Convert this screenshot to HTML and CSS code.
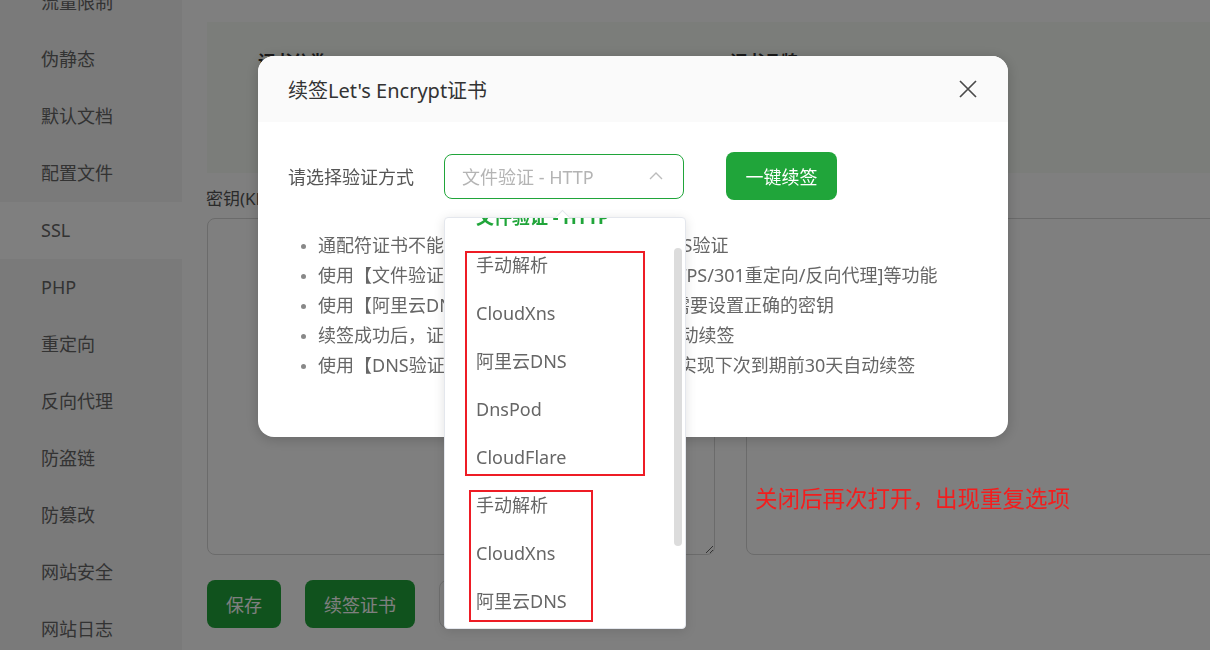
FILE: index.html
```html
<!DOCTYPE html>
<html lang="zh-CN">
<head>
    <meta charset="UTF-8">
    <meta name="viewport" content="width=device-width, initial-scale=1.0">
    <title>续签Let's Encrypt证书</title>
    <link rel="stylesheet" href="styles.css">
</head>
<body>
    <div class="page">
        <aside class="side">
            <ul class="side-menu">
                <li>流量限制</li>
                <li>伪静态</li>
                <li>默认文档</li>
                <li>配置文件</li>
                <li class="active">SSL</li>
                <li>PHP</li>
                <li>重定向</li>
                <li>反向代理</li>
                <li>防盗链</li>
                <li>防篡改</li>
                <li>网站安全</li>
                <li>网站日志</li>
            </ul>
        </aside>
        <main class="main">
            <section class="cert-info">
                <div class="info-row">
                    <span class="info-cell"><b>证书分类：</b><span class="green">Let's Encrypt</span></span>
                    <span class="info-cell"><b>证书品牌：</b>R10</span>
                </div>
                <div class="info-row">
                    <span class="info-cell"><b>认证域名：</b>www.example.com</span>
                    <span class="info-cell"><b>到期时间：</b>剩余89天</span>
                </div>
                <div class="info-row">
                    <span class="info-cell"><b>强制HTTPS：</b>未开启</span>
                </div>
            </section>
            <div class="cert-edit">
                <div class="edit-col">
                    <label class="edit-label">密钥(KEY)</label>
                    <textarea class="edit-box"></textarea>
                </div>
                <div class="edit-col">
                    <label class="edit-label">证书(PEM格式)</label>
                    <textarea class="edit-box"></textarea>
                </div>
            </div>
            <div class="actions">
                <button class="btn">保存</button>
                <button class="btn">续签证书</button>
                <button class="btn btn-plain">关闭SSL</button>
            </div>
        </main>
    </div>

    <div class="mask"></div>

    <div class="dialog">
        <div class="dialog-head">
            <span class="dialog-title">续签Let's Encrypt证书</span>
            <svg class="dialog-close" width="20" height="20" viewBox="0 0 20 20">
                <path d="M2 2 L18 18 M18 2 L2 18" stroke="#4a4a4a" stroke-width="1.7" fill="none"/>
            </svg>
        </div>
        <div class="dialog-body">
            <div class="form-row">
                <span class="form-label">请选择验证方式</span>
                <div class="select">
                    <span class="select-text">文件验证 - HTTP</span>
                    <svg class="select-arrow" width="14" height="8" viewBox="0 0 14 8">
                        <path d="M1 7 L7 1 L13 7" stroke="#bcbcbc" stroke-width="1.4" fill="none"/>
                    </svg>
                </div>
                <button class="btn btn-renew">一键续签</button>
            </div>
            <ul class="tips">
                <li>通配符证书不能使用【文件验证】，请选择 DNS验证</li>
                <li>使用【文件验证】时,请确保没有开启[强制HTTPS/301重定向/反向代理]等功能</li>
                <li>使用【阿里云DNS】【DNSPod】等验证方式 需要设置正确的密钥</li>
                <li>续签成功后，证书将会在到期前30天内尝试自动续签</li>
                <li>使用【DNS验证】时，请配置正确的接口才能实现下次到期前30天自动续签</li>
            </ul>
        </div>
    </div>

    <div class="dropdown">
        <span class="dropdown-arrow"></span>
        <div class="dropdown-view">
            <ul class="options">
                <li class="selected">文件验证 - HTTP</li>
                <li>手动解析</li>
                <li>CloudXns</li>
                <li>阿里云DNS</li>
                <li>DnsPod</li>
                <li>CloudFlare</li>
                <li>手动解析</li>
                <li>CloudXns</li>
                <li>阿里云DNS</li>
                <li>DnsPod</li>
            </ul>
            <span class="scroll-thumb"></span>
        </div>
    </div>

    <div class="mark mark-first"></div>
    <div class="mark mark-second"></div>
    <p class="note">关闭后再次打开，出现重复选项</p>
</body>
</html>
```

FILE: styles.css
```css
html, body {
    margin: 0;
    padding: 0;
}
body {
    width: 1210px;
    height: 650px;
    overflow: hidden;
    font-family: "Noto Sans", "Noto Sans CJK SC", sans-serif;
    color: #333;
    background: #fff;
}
ul {
    margin: 0;
    padding: 0;
    list-style: none;
}
.page {
    display: flex;
    height: 650px;
}

/* 左侧菜单 */
.side {
    width: 182px;
    flex-shrink: 0;
    background: #f4f4f4;
    overflow: hidden;
}
.side-menu {
    margin-top: -26px;
}
.side-menu li {
    height: 57px;
    line-height: 57px;
    padding-left: 41px;
    font-size: 18px;
    color: #666;
}
.side-menu li.active {
    background: #fff;
}

/* 主体 */
.main {
    flex: 1;
    padding: 22px 0 0 25px;
    min-width: 0;
}
.cert-info {
    height: 151px;
    box-sizing: border-box;
    padding: 22px 0 0 51px;
    background: #f6faf4;
    white-space: nowrap;
}
.info-row {
    display: flex;
    line-height: 36px;
    font-size: 17px;
}
.info-cell {
    width: 472px;
    flex-shrink: 0;
}
.info-cell b {
    color: #333;
}
.green {
    color: #20a53a;
}
.cert-edit {
    display: flex;
    gap: 31px;
}
.edit-col {
    width: 508px;
    flex-shrink: 0;
}
.edit-label {
    display: block;
    margin: 14px 0 7px -1px;
    line-height: 24px;
    font-size: 17px;
    color: #555;
}
.edit-box {
    display: block;
    width: 508px;
    height: 337px;
    box-sizing: border-box;
    border: 1px solid #d6d6d6;
    border-radius: 8px;
    background: #fff;
}
.actions {
    display: flex;
    gap: 24px;
    margin-top: 25px;
}
.btn {
    height: 48px;
    padding: 0 19px;
    border: none;
    border-radius: 8px;
    background: #20a53a;
    color: #fff;
    font-family: inherit;
    font-size: 18px;
}
.btn-plain {
    background: #fff;
    border: 1px solid #ddd;
    color: #666;
}

/* 遮罩 */
.mask {
    position: fixed;
    inset: 0;
    background: rgba(0, 0, 0, 0.5);
}

/* 弹窗 */
.dialog {
    position: fixed;
    left: 258px;
    top: 56px;
    width: 750px;
    height: 381px;
    border-radius: 16px;
    background: #fff;
    overflow: hidden;
    box-shadow: 0 2px 14px rgba(0, 0, 0, 0.2);
}
.dialog-head {
    display: flex;
    align-items: center;
    justify-content: space-between;
    height: 66px;
    padding: 0 30px 0 30px;
    background: #fafafa;
}
.dialog-title {
    font-size: 20px;
    color: #333;
}
.dialog-body {
    padding: 30px 0 0 30px;
}
.form-row {
    display: flex;
    align-items: center;
}
.form-label {
    width: 156px;
    font-size: 18px;
    color: #555;
}
.select {
    display: flex;
    align-items: center;
    justify-content: space-between;
    width: 240px;
    height: 45px;
    box-sizing: border-box;
    padding: 0 20px 0 17px;
    border: 1.5px solid #20a53a;
    border-radius: 8px;
}
.select-text {
    font-size: 18px;
    color: #b4b4b4;
}
.btn-renew {
    margin-left: 42px;
    width: 111px;
    padding: 0;
}
.tips {
    margin-top: 30px;
    padding-left: 30px;
    list-style: disc;
    color: #666;
    font-size: 18px;
    line-height: 30px;
    white-space: nowrap;
}
.tips li::marker {
    color: #888;
    font-size: 14px;
}

/* 下拉框 */
.dropdown {
    position: fixed;
    left: 444px;
    top: 217px;
    width: 242px;
    height: 412px;
    box-sizing: border-box;
    border: 1px solid #e4e7ed;
    border-radius: 4px;
    background: #fff;
    box-shadow: 0 2px 12px rgba(0, 0, 0, 0.12);
}
.dropdown-arrow {
    position: absolute;
    left: 112px;
    top: -6px;
    width: 10px;
    height: 10px;
    background: #fff;
    border-left: 1px solid #e4e7ed;
    border-top: 1px solid #e4e7ed;
    transform: rotate(45deg);
}
.dropdown-view {
    position: relative;
    height: 100%;
    overflow: hidden;
    border-radius: 4px;
}
.options {
    margin-top: -25px;
}
.options li {
    height: 48px;
    line-height: 48px;
    padding-left: 31px;
    font-size: 18px;
    color: #666;
}
.options li.selected {
    color: #20a53a;
    font-weight: bold;
}
.scroll-thumb {
    position: absolute;
    right: 3px;
    top: 30px;
    width: 8px;
    height: 298px;
    border-radius: 4px;
    background: #dcdcdc;
}

/* 标注 */
.mark {
    position: fixed;
    border: 2px solid #ee1c25;
}
.mark-first {
    left: 465px;
    top: 251px;
    width: 176px;
    height: 221px;
}
.mark-second {
    left: 469px;
    top: 490px;
    width: 120px;
    height: 128px;
}
.note {
    position: fixed;
    left: 755px;
    top: 484px;
    margin: 0;
    line-height: 30px;
    font-size: 22.5px;
    color: #f41d1d;
}
```
